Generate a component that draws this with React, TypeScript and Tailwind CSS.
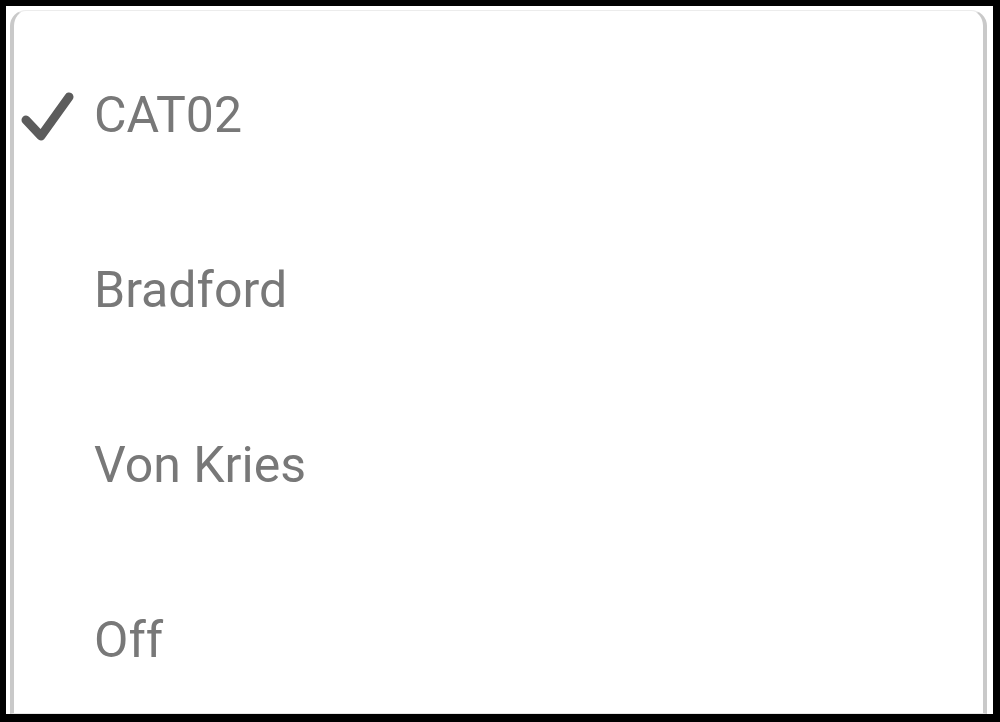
const options = ["CAT02", "Bradford", "Von Kries", "Off"];

const CheckIcon = () => (
  <svg width="56" height="52" viewBox="0 0 56 52" className="block">
    <polyline
      points="6,30 21,46 49,7"
      fill="none"
      stroke="#5c5c5c"
      strokeWidth="9"
      strokeLinecap="round"
      strokeLinejoin="round"
    />
  </svg>
);

export default function App() {
  const selected = "CAT02";

  return (
    <div className="h-[722px] w-[1000px] bg-black pt-[6px] pl-[6px] pr-[7px] pb-[8px]">
      <div className="h-full bg-white pt-[4px] pl-[4px] pr-[6px]">
        <div className="h-full rounded-t-[16px] border-x-[4px] border-t border-b border-x-[#c9c9c9] border-t-[#ececec] border-b-[#e6e6e6] overflow-hidden">
          <ul className="pt-[17px] font-['Roboto','Liberation_Sans',sans-serif] text-[50px] text-[#787878]">
            {options.map((opt) => (
              <li key={opt} className="flex h-[175px] items-center leading-[175px]">
                <div className="flex w-[80px] justify-start pl-[6px]">
                  {opt === selected && <CheckIcon />}
                </div>
                <span>{opt}</span>
              </li>
            ))}
          </ul>
        </div>
      </div>
    </div>
  );
}
